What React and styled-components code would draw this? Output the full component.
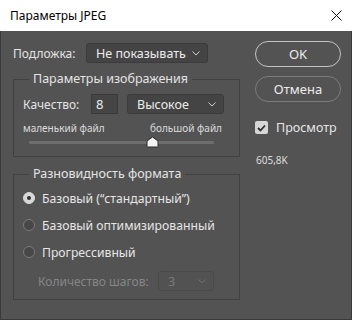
import React, { useState } from 'react'
import styled, { createGlobalStyle } from 'styled-components'

const Global = createGlobalStyle`
    html, body {
        margin: 0;
        padding: 0;
        background: #2b2b2b;
    }
    body {
        font-family: "Noto Sans", "Open Sans", sans-serif;
        font-size: 12px;
    }
`

const Window = styled.div`
    width: 352px;
    height: 320px;
    box-sizing: border-box;
    border: 1px solid #3a3a3a;
    border-top: none;
    background: #535353;
    display: flex;
    flex-direction: column;
`

const TitleBar = styled.div`
    height: 31px;
    flex: none;
    background: #fff;
    margin: 0 -1px;
    display: flex;
    align-items: center;
    justify-content: space-between;
    padding: 0 10px 0 10px;
    color: #000;
    font-size: 12px;
`

const Body = styled.div`
    display: flex;
    gap: 15px;
    padding: 10px 0 0 12px;
`

const LeftCol = styled.div`
    width: 227px;
    display: flex;
    flex-direction: column;
`

const RightCol = styled.div`
    width: 86px;
    display: flex;
    flex-direction: column;
`

const Row = styled.div`
    display: flex;
    align-items: center;
    height: ${({h}) => h || 20}px;
    margin-top: ${({mt}) => mt || 0}px;
    padding-left: ${({pl}) => pl || 0}px;
    color: ${({disabled}) => (disabled ? '#868686' : '#e4e4e4')};
`

const Label = styled.span`
    width: ${({w}) => w}px;
    flex: none;
    white-space: nowrap;
`

const SelectBox = styled.div`
    width: ${({w}) => w}px;
    height: ${({h}) => h || 20}px;
    box-sizing: border-box;
    margin-left: ${({ml}) => ml || 0}px;
    background: ${({disabled}) => (disabled ? '#525252' : '#444444')};
    border: 1px solid ${({disabled}) => (disabled ? '#4a4a4a' : '#3b3b3b')};
    border-radius: 3px;
    display: flex;
    align-items: center;
    justify-content: space-between;
    padding: 0 7px 0 9px;
    color: ${({disabled}) => (disabled ? '#7a7a7a' : '#ececec')};
    font-size: 12.5px;
`

const NumInput = styled.div`
    width: 27px;
    height: 20px;
    box-sizing: border-box;
    background: #454545;
    border: 1px solid #3a3a3a;
    padding-left: 4px;
    display: flex;
    align-items: center;
    color: #ececec;
    font-size: 13px;
`

const Group = styled.fieldset`
    margin: ${({mt}) => mt}px 0 0 0;
    padding: 0 0 ${({pb}) => pb}px 9px;
    border: 1px solid #414141;
    min-width: 0;
    box-sizing: border-box;
    width: 227px;
`

const Legend = styled.legend`
    margin-left: 6px;
    padding: 0 4px;
    color: #e4e4e4;
    font-size: 12.5px;
    line-height: 16px;
`

const SliderLabels = styled.div`
    display: flex;
    justify-content: space-between;
    width: 199px;
    margin-top: 8px;
    font-size: 10px;
    line-height: 12px;
    color: #dcdcdc;
`

const Track = styled.div`
    position: relative;
    width: 185px;
    height: 3px;
    margin: 7px 0 0 6px;
    background: #6e6e6e;
    border-radius: 1px;
`

const Thumb = styled.svg`
    position: absolute;
    top: -5px;
    margin-left: -6px;
`

const RadioRow = styled.div`
    display: flex;
    align-items: center;
    height: 16px;
    margin-top: ${({mt}) => mt}px;
    color: #e6e6e6;
    font-size: 12.2px;
    white-space: nowrap;
    cursor: pointer;
`

const RadioCircle = styled.span`
    width: 12px;
    height: 12px;
    box-sizing: border-box;
    border-radius: 50%;
    margin-right: 7px;
    flex: none;
    display: flex;
    align-items: center;
    justify-content: center;
    background: ${({on}) => (on ? '#d9d9d9' : '#474747')};
    border: 1px solid ${({on}) => (on ? '#d9d9d9' : '#7a7a7a')};
    &::after {
        content: '';
        display: ${({on}) => (on ? 'block' : 'none')};
        width: 4px;
        height: 4px;
        border-radius: 50%;
        background: #333;
    }
`

const PillButton = styled.button`
    width: 86px;
    height: 26px;
    margin-top: ${({mt}) => mt}px;
    border-radius: 13px;
    background: transparent;
    border: ${({primary}) => (primary ? '1.5px solid #c4c4c4' : '1px solid #7d7d7d')};
    color: #ececec;
    font-family: inherit;
    font-size: 13px;
    padding: 0;
    cursor: pointer;
`

const Check = styled.div`
    display: flex;
    align-items: center;
    margin-top: 17px;
    color: #e6e6e6;
    font-size: 12.5px;
    cursor: pointer;
`

const CheckBox = styled.span`
    width: 13px;
    height: 13px;
    border-radius: 2px;
    background: #d6d6d6;
    margin-right: 8px;
    display: flex;
    align-items: center;
    justify-content: center;
`

const Size = styled.div`
    margin: 17px 0 0 1px;
    font-size: 10px;
    color: #dedede;
`

const Chevron = ({color}) => (
    <svg width="8" height="5" viewBox="0 0 8 5">
        <path d="M0.5 0.5 L4 4 L7.5 0.5" fill="none" stroke={color} strokeWidth="1" />
    </svg>
)

const App = () => {
    const [mode, setMode] = useState(0)
    const [preview, setPreview] = useState(true)
    const quality = 8
    const pos = (quality / 12) * 100

    const modes = ['Базовый (“стандартный”)', 'Базовый оптимизированный', 'Прогрессивный']

    return (
        <>
            <Global />
            <Window>
                <TitleBar>
                    <span>Параметры JPEG</span>
                    <svg width="11" height="11" viewBox="0 0 11 11">
                        <path d="M0.5 0.5 L10.5 10.5 M10.5 0.5 L0.5 10.5" stroke="#111" strokeWidth="1" />
                    </svg>
                </TitleBar>
                <Body>
                    <LeftCol>
                        <Row mt={2}>
                            <Label w={73}>Подложка:</Label>
                            <SelectBox w={122}>
                                <span>Не показывать</span>
                                <Chevron color="#cfcfcf" />
                            </SelectBox>
                        </Row>

                        <Group mt={8} pb={12}>
                            <Legend>Параметры изображения</Legend>
                            <Row mt={7}>
                                <Label w={68}>Качество:</Label>
                                <NumInput>{quality}</NumInput>
                                <SelectBox w={97} ml={9}>
                                    <span>Высокое</span>
                                    <Chevron color="#cfcfcf" />
                                </SelectBox>
                            </Row>
                            <SliderLabels>
                                <span>маленький файл</span>
                                <span>большой файл</span>
                            </SliderLabels>
                            <Track>
                                <Thumb width="13" height="12" viewBox="0 0 13 12" style={{left: `${pos}%`}}>
                                    <path d="M1 5 L6.5 1 L12 5 L12 10.5 Q12 11 11.5 11 L1.5 11 Q1 11 1 10.5 Z" fill="#f2f2f2" stroke="#2a2a2a" strokeWidth="1" />
                                </Thumb>
                            </Track>
                        </Group>

                        <Group mt={9} pb={8}>
                            <Legend>Разновидность формата</Legend>
                            {modes.map((m, i) => (
                                <RadioRow key={m} mt={i === 0 ? 8 : 11} onClick={() => setMode(i)}>
                                    <RadioCircle on={mode === i} />
                                    {m}
                                </RadioRow>
                            ))}
                            <Row mt={11} pl={15} disabled>
                                <Label w={120}>Количество шагов:</Label>
                                <SelectBox w={56} disabled>
                                    <span>3</span>
                                    <Chevron color="#6e6e6e" />
                                </SelectBox>
                            </Row>
                        </Group>
                    </LeftCol>

                    <RightCol>
                        <PillButton primary mt={0}>OK</PillButton>
                        <PillButton mt={9}>Отмена</PillButton>
                        <Check onClick={() => setPreview(!preview)}>
                            <CheckBox>
                                {preview && (
                                    <svg width="9" height="8" viewBox="0 0 9 8">
                                        <path d="M1 4 L3.5 6.5 L8 1.5" fill="none" stroke="#2e2e2e" strokeWidth="1.8" />
                                    </svg>
                                )}
                            </CheckBox>
                            Просмотр
                        </Check>
                        <Size>605,8K</Size>
                    </RightCol>
                </Body>
            </Window>
        </>
    )
}

export default App
